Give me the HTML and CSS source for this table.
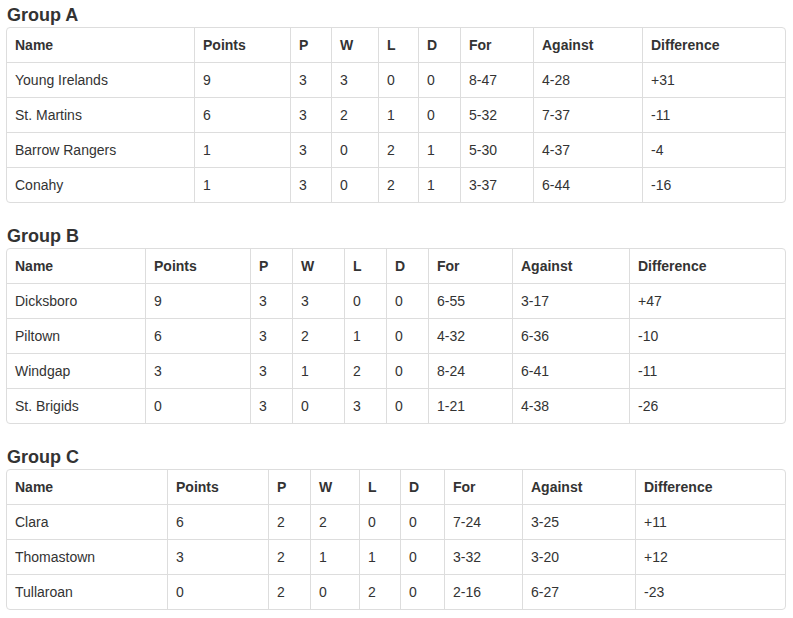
FILE: index.html
```html
<!DOCTYPE html>
<html>
<head>
<meta charset="utf-8">
<link rel="stylesheet" href="styles.css">
</head>
<body>
<div class="page">
  <section class="group">
    <h4 class="group-title">Group A</h4>
    <div class="table-wrap">
      <table class="standings group-a">
        <colgroup>
          <col class="c-name"><col class="c-pts"><col class="c-p"><col class="c-w"><col class="c-l"><col class="c-d"><col class="c-for"><col class="c-ag"><col class="c-diff">
        </colgroup>
        <thead>
          <tr><th>Name</th><th>Points</th><th>P</th><th>W</th><th>L</th><th>D</th><th>For</th><th>Against</th><th>Difference</th></tr>
        </thead>
        <tbody>
          <tr><td>Young Irelands</td><td>9</td><td>3</td><td>3</td><td>0</td><td>0</td><td>8-47</td><td>4-28</td><td>+31</td></tr>
          <tr><td>St. Martins</td><td>6</td><td>3</td><td>2</td><td>1</td><td>0</td><td>5-32</td><td>7-37</td><td>-11</td></tr>
          <tr><td>Barrow Rangers</td><td>1</td><td>3</td><td>0</td><td>2</td><td>1</td><td>5-30</td><td>4-37</td><td>-4</td></tr>
          <tr><td>Conahy</td><td>1</td><td>3</td><td>0</td><td>2</td><td>1</td><td>3-37</td><td>6-44</td><td>-16</td></tr>
        </tbody>
      </table>
    </div>
  </section>
  <section class="group">
    <h4 class="group-title">Group B</h4>
    <div class="table-wrap">
      <table class="standings group-b">
        <colgroup>
          <col class="c-name"><col class="c-pts"><col class="c-p"><col class="c-w"><col class="c-l"><col class="c-d"><col class="c-for"><col class="c-ag"><col class="c-diff">
        </colgroup>
        <thead>
          <tr><th>Name</th><th>Points</th><th>P</th><th>W</th><th>L</th><th>D</th><th>For</th><th>Against</th><th>Difference</th></tr>
        </thead>
        <tbody>
          <tr><td>Dicksboro</td><td>9</td><td>3</td><td>3</td><td>0</td><td>0</td><td>6-55</td><td>3-17</td><td>+47</td></tr>
          <tr><td>Piltown</td><td>6</td><td>3</td><td>2</td><td>1</td><td>0</td><td>4-32</td><td>6-36</td><td>-10</td></tr>
          <tr><td>Windgap</td><td>3</td><td>3</td><td>1</td><td>2</td><td>0</td><td>8-24</td><td>6-41</td><td>-11</td></tr>
          <tr><td>St. Brigids</td><td>0</td><td>3</td><td>0</td><td>3</td><td>0</td><td>1-21</td><td>4-38</td><td>-26</td></tr>
        </tbody>
      </table>
    </div>
  </section>
  <section class="group">
    <h4 class="group-title">Group C</h4>
    <div class="table-wrap">
      <table class="standings group-c">
        <colgroup>
          <col class="c-name"><col class="c-pts"><col class="c-p"><col class="c-w"><col class="c-l"><col class="c-d"><col class="c-for"><col class="c-ag"><col class="c-diff">
        </colgroup>
        <thead>
          <tr><th>Name</th><th>Points</th><th>P</th><th>W</th><th>L</th><th>D</th><th>For</th><th>Against</th><th>Difference</th></tr>
        </thead>
        <tbody>
          <tr><td>Clara</td><td>6</td><td>2</td><td>2</td><td>0</td><td>0</td><td>7-24</td><td>3-25</td><td>+11</td></tr>
          <tr><td>Thomastown</td><td>3</td><td>2</td><td>1</td><td>1</td><td>0</td><td>3-32</td><td>3-20</td><td>+12</td></tr>
          <tr><td>Tullaroan</td><td>0</td><td>2</td><td>0</td><td>2</td><td>0</td><td>2-16</td><td>6-27</td><td>-23</td></tr>
        </tbody>
      </table>
    </div>
  </section>
</div>
</body>
</html>
```
FILE: styles.css
```css
html, body {
  margin: 0;
  padding: 0;
  background: #fff;
}
body {
  font-family: "Liberation Sans", Arial, Helvetica, sans-serif;
  font-size: 14px;
  color: #333;
}
.page {
  padding: 0 7px 0 6px;
}
.group + .group {
  margin-top: 18px;
}
.group-title {
  margin: 0;
  padding: 5px 0 1px 1px;
  font-size: 18px;
  line-height: 21px;
  font-weight: bold;
  color: #333;
}
.table-wrap {
  border: 1px solid #ddd;
  border-radius: 4px;
  overflow: hidden;
}
.standings {
  width: 100%;
  table-layout: fixed;
  border-collapse: separate;
  border-spacing: 0;
}
.standings th,
.standings td {
  padding: 8px;
  line-height: 18px;
  text-align: left;
  vertical-align: top;
  white-space: nowrap;
  border-left: 1px solid #ddd;
  border-top: 1px solid #ddd;
}
.standings th {
  font-weight: bold;
}
.standings tr > :first-child {
  border-left: 0;
}
.standings thead tr:first-child > * {
  border-top: 0;
}

/* Group A column widths */
.group-a .c-name { width: 187px; }
.group-a .c-pts  { width: 96px; }
.group-a .c-p    { width: 41px; }
.group-a .c-w    { width: 47px; }
.group-a .c-l    { width: 40px; }
.group-a .c-d    { width: 42px; }
.group-a .c-for  { width: 73px; }
.group-a .c-ag   { width: 109px; }
.group-a .c-diff { width: 143px; }

/* Group B column widths */
.group-b .c-name { width: 138px; }
.group-b .c-pts  { width: 105px; }
.group-b .c-p    { width: 42px; }
.group-b .c-w    { width: 52px; }
.group-b .c-l    { width: 42px; }
.group-b .c-d    { width: 42px; }
.group-b .c-for  { width: 84px; }
.group-b .c-ag   { width: 117px; }
.group-b .c-diff { width: 156px; }

/* Group C column widths */
.group-c .c-name { width: 160px; }
.group-c .c-pts  { width: 101px; }
.group-c .c-p    { width: 42px; }
.group-c .c-w    { width: 49px; }
.group-c .c-l    { width: 41px; }
.group-c .c-d    { width: 44px; }
.group-c .c-for  { width: 78px; }
.group-c .c-ag   { width: 113px; }
.group-c .c-diff { width: 150px; }
```
